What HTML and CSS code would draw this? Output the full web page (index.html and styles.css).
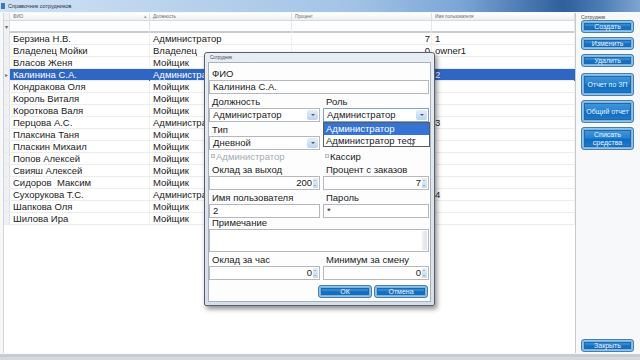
FILE: index.html
```html
<!DOCTYPE html>
<html lang="ru">
<head>
  <meta charset="UTF-8">
  <meta name="viewport" content="width=device-width, initial-scale=1.0">
  <title>Справочник сотрудников</title>
  <link rel="stylesheet" href="styles.css">
</head>
<body>

  <!-- Главное окно -->
  <div class="window">
    <div class="titlebar">
      <span class="app-icon"></span>
      <span class="title">Справочник сотрудников</span>
    </div>

    <div class="client">
      <!-- Таблица сотрудников -->
      <div class="grid">
        <div class="row head">
          <div class="ind"></div>
          <div class="cell">ФИО <span class="sort">▴</span></div>
          <div class="cell">Должность</div>
          <div class="cell">Процент</div>
          <div class="cell">Имя пользователя</div>
        </div>
        <div class="row filter">
          <div class="ind">▾</div>
          <div class="cell"></div>
          <div class="cell"></div>
          <div class="cell"></div>
          <div class="cell"></div>
        </div>

        <div class="row"><div class="ind"></div><div class="cell">Берзина Н.В.</div><div class="cell">Администратор</div><div class="cell num">7</div><div class="cell">1</div></div>
        <div class="row"><div class="ind"></div><div class="cell">Владелец Мойки</div><div class="cell">Владелец</div><div class="cell num">0</div><div class="cell">owner1</div></div>
        <div class="row"><div class="ind"></div><div class="cell">Власов Женя</div><div class="cell">Мойщик</div><div class="cell num"></div><div class="cell"></div></div>
        <div class="row selected"><div class="ind">▸</div><div class="cell">Калинина С.А.</div><div class="cell">Администратор</div><div class="cell num"></div><div class="cell">2</div></div>
        <div class="row"><div class="ind"></div><div class="cell">Кондракова Оля</div><div class="cell">Мойщик</div><div class="cell num"></div><div class="cell"></div></div>
        <div class="row"><div class="ind"></div><div class="cell">Король Виталя</div><div class="cell">Мойщик</div><div class="cell num"></div><div class="cell"></div></div>
        <div class="row"><div class="ind"></div><div class="cell">Короткова Валя</div><div class="cell">Мойщик</div><div class="cell num"></div><div class="cell"></div></div>
        <div class="row"><div class="ind"></div><div class="cell">Перцова А.С.</div><div class="cell">Администратор</div><div class="cell num"></div><div class="cell">3</div></div>
        <div class="row"><div class="ind"></div><div class="cell">Плаксина Таня</div><div class="cell">Мойщик</div><div class="cell num"></div><div class="cell"></div></div>
        <div class="row"><div class="ind"></div><div class="cell">Пласкин Михаил</div><div class="cell">Мойщик</div><div class="cell num"></div><div class="cell"></div></div>
        <div class="row"><div class="ind"></div><div class="cell">Попов Алексей</div><div class="cell">Мойщик</div><div class="cell num"></div><div class="cell"></div></div>
        <div class="row"><div class="ind"></div><div class="cell">Свияш Алексей</div><div class="cell">Мойщик</div><div class="cell num"></div><div class="cell"></div></div>
        <div class="row"><div class="ind"></div><div class="cell">Сидоров&nbsp; Максим</div><div class="cell">Мойщик</div><div class="cell num"></div><div class="cell"></div></div>
        <div class="row"><div class="ind"></div><div class="cell">Сухорукова Т.С.</div><div class="cell">Администратор</div><div class="cell num"></div><div class="cell">4</div></div>
        <div class="row"><div class="ind"></div><div class="cell">Шапкова Оля</div><div class="cell">Мойщик</div><div class="cell num"></div><div class="cell"></div></div>
        <div class="row"><div class="ind"></div><div class="cell">Шилова Ира</div><div class="cell">Мойщик</div><div class="cell num"></div><div class="cell"></div></div>
      </div>

      <!-- Панель действий -->
      <div class="side">
        <div class="group-label">Сотрудник</div>
        <button class="btn">Создать</button>
        <button class="btn">Изменить</button>
        <button class="btn">Удалить</button>
        <button class="btn tall first-tall">Отчет по ЗП</button>
        <button class="btn tall">Общий отчет</button>
        <button class="btn tall">Списать<br>средства</button>
        <button class="btn close">Закрыть</button>
      </div>
    </div>
    <div class="statusbar"></div>
  </div>

  <!-- Окно редактирования сотрудника -->
  <div class="dialog">
    <div class="dlg-title">Сотрудник</div>
    <div class="dlg-body">
      <div class="lbl">ФИО</div>
      <div class="field">Калинина С.А.</div>

      <div class="pair">
        <div class="lbl">Должность</div>
        <div class="lbl">Роль</div>
      </div>
      <div class="pair">
        <div class="field combo">Администратор<span class="drop"></span></div>
        <div class="field combo focus">Администратор<span class="drop"></span></div>
      </div>

      <div class="pair">
        <div class="lbl">Тип</div>
        <div class="lbl"></div>
      </div>
      <div class="pair">
        <div class="field combo">Дневной<span class="drop"></span></div>
        <div></div>
      </div>

      <div class="pair checks">
        <label class="chk disabled"><span class="box"></span>Администратор</label>
        <label class="chk"><span class="box"></span>Кассир</label>
      </div>

      <div class="pair">
        <div class="lbl">Оклад за выход</div>
        <div class="lbl">Процент с заказов</div>
      </div>
      <div class="pair">
        <div class="field num">200<span class="spin"></span></div>
        <div class="field num">7<span class="spin"></span></div>
      </div>

      <div class="pair">
        <div class="lbl">Имя пользователя</div>
        <div class="lbl">Пароль</div>
      </div>
      <div class="pair">
        <div class="field">2</div>
        <div class="field">*</div>
      </div>

      <div class="lbl short">Примечание</div>
      <div class="field memo"><span class="vscroll"></span></div>

      <div class="pair">
        <div class="lbl">Оклад за час</div>
        <div class="lbl">Минимум за смену</div>
      </div>
      <div class="pair">
        <div class="field num">0<span class="spin"></span></div>
        <div class="field num">0<span class="spin"></span></div>
      </div>

      <div class="dlg-buttons">
        <button class="btn">ОК</button>
        <button class="btn">Отмена</button>
      </div>
    </div>

    <!-- Раскрытый список ролей -->
    <div class="droplist">
      <div class="item active">Администратор</div>
      <div class="item">Администратор тест<svg class="cursor" width="5" height="8" viewBox="0 0 5 8"><path d="M0.5 0.5 L0.5 6.5 L1.8 5.2 L2.8 7.5 L3.6 7.1 L2.7 4.9 L4.5 4.9 Z" fill="#fff" stroke="#333" stroke-width="0.6"/></svg></div>
    </div>
  </div>

</body>
</html>
```

FILE: styles.css
```css
* {
  box-sizing: border-box;
}
html, body {
  margin: 0;
  padding: 0;
}
body {
  width: 640px;
  height: 360px;
  overflow: hidden;
  position: relative;
  background-color: #d5d8dc;
  font-family: "Liberation Sans", Arial, sans-serif;
  font-size: 9.5px;
  color: #1b1b1b;
}

/* Главное окно */
.window {
  height: 357px;
  display: flex;
  flex-direction: column;
  background-color: #f6f8fa;
}
.titlebar {
  height: 12px;
  display: flex;
  align-items: center;
  padding-left: 1px;
  background: linear-gradient(90deg, #cfe2f4 0%, #b7d1ec 30%, #a3c3e6 55%, #7aa6d6 72%, #2f5f9c 88%, #4d7db6 94%, #7ea5d0 100%);
}
.app-icon {
  width: 4px;
  height: 6px;
  background-color: #3f77bb;
  margin-right: 3px;
}
.title {
  font-size: 5.5px;
  color: #24303c;
}
.client {
  flex: 1;
  display: flex;
  padding: 1px 0 1px 3px;
}

/* Таблица */
.grid {
  width: 573px;
  display: flex;
  flex-direction: column;
  background-color: #fff;
  border-left: 1px solid #d3d6db;
  border-right: 1px solid #c6cad0;
}
.row {
  display: grid;
  grid-template-columns: 6px 140px 142px 140px 143px;
  height: 12px;
  line-height: 12px;
  border-bottom: 1px solid #ececec;
}
.row .cell {
  padding-left: 3px;
  white-space: nowrap;
  overflow: hidden;
  border-right: 1px solid #f1f1f1;
}
.row .cell.num {
  text-align: right;
  padding-right: 1px;
}
.row .ind {
  background-color: #eff1f3;
  border-right: 1px solid #dcdfe3;
  font-size: 6px;
  color: #666;
  text-align: center;
}
.row.head {
  height: 8px;
  line-height: 8px;
  font-size: 4.5px;
  color: #6b6b6b;
  background: linear-gradient(#ffffff, #eceff2);
  border-bottom: 1px solid #d6d9dd;
}
.row.head .cell {
  display: flex;
  justify-content: space-between;
  padding-right: 2px;
  border-right: 1px solid #dadde1;
}
.sort {
  color: #999;
}
.row.filter {
  height: 12px;
  border-bottom: 2px solid #c9ccd0;
}
.row.filter .cell {
  border-right: 1px solid #e4e6e9;
}
.row.selected {
  background-color: #2e66c4;
  color: #fff;
}
.row.selected .cell {
  border-right-color: #2e66c4;
}
.row.selected .ind {
  color: #777;
}

/* Панель действий */
.side {
  flex: 1;
  display: flex;
  flex-direction: column;
  padding: 1px 0 0 5px;
}
.group-label {
  font-size: 5px;
  line-height: 6px;
  color: #444;
}
.btn {
  width: 53px;
  height: 13px;
  margin: 0 0 4px;
  padding: 0;
  border: 1px solid #467eb0;
  border-radius: 3px;
  background: linear-gradient(#4a9ddf 0%, #2684d0 45%, #0f6bbf 55%, #2380cd 100%);
  box-shadow: inset 0 0 0 1px #8fc4ec, inset 0 0 0 2px #7ab6e6, inset 0 0 0 3px #2566a3;
  color: #eaf5ff;
  font-family: "Liberation Sans", Arial, sans-serif;
  font-size: 7px;
  line-height: 8px;
}
.btn.tall {
  height: 23px;
}
.btn.first-tall {
  margin-top: 2px;
}
.btn.close {
  margin-top: auto;
  margin-bottom: 1px;
}
.statusbar {
  height: 3px;
  background-color: #c9ccd1;
}

/* Диалог */
.dialog {
  position: absolute;
  left: 204px;
  top: 52px;
  width: 231px;
  height: 254px;
  display: flex;
  flex-direction: column;
  padding: 0 3px 3px;
  border: 1px solid #58616b;
  border-radius: 3px 3px 2px 2px;
  background: linear-gradient(#e8edf3, #d6dee8);
  box-shadow: 2px 3px 5px rgba(0, 0, 0, 0.45);
}
.dlg-title {
  height: 9px;
  line-height: 9px;
  padding-left: 2px;
  font-size: 4.5px;
  color: #3a4450;
}
.dlg-body {
  flex: 1;
  background-color: #fdfdfd;
  border: 1px solid #a7b1bd;
  padding: 3px 1px 0 0;
  font-size: 9.5px;
}
.pair {
  display: grid;
  grid-template-columns: 111px 106px;
  column-gap: 3px;
}
.lbl {
  height: 14px;
  line-height: 14px;
  padding-left: 3px;
  padding-top: 1px;
  white-space: nowrap;
}
.lbl.short {
  height: 11px;
  line-height: 10px;
  padding-top: 0;
}
.field {
  position: relative;
  height: 14px;
  line-height: 12px;
  padding: 0 3px;
  border: 1px solid #b4b8be;
  background-color: #fff;
  white-space: nowrap;
}
.field.combo {
  padding-right: 14px;
}
.field.focus {
  border-color: #7da2ce;
}
.drop {
  position: absolute;
  right: 1px;
  top: 1px;
  width: 11px;
  height: 10px;
  border-radius: 2px;
  background: linear-gradient(#e3eefa, #bcd3ee);
}
.drop::after {
  content: "";
  position: absolute;
  left: 4px;
  top: 4px;
  border-left: 2px solid transparent;
  border-right: 2px solid transparent;
  border-top: 2px solid #4a5a6c;
}
.field.num {
  text-align: right;
  padding-right: 7px;
}
.spin {
  position: absolute;
  right: 1px;
  top: 1px;
  width: 5px;
  height: 10px;
  background: linear-gradient(#e6eef8, #c7d8ec);
}
.spin::before, .spin::after {
  content: "";
  position: absolute;
  left: 1px;
  border-left: 1.5px solid transparent;
  border-right: 1.5px solid transparent;
}
.spin::before {
  top: 2px;
  border-bottom: 1.5px solid #6a7a8c;
}
.spin::after {
  bottom: 2px;
  border-top: 1.5px solid #6a7a8c;
}
.checks {
  height: 12px;
  line-height: 11px;
}
.chk {
  display: flex;
  align-items: center;
  padding-left: 2px;
}
.chk.disabled {
  color: #a4abb3;
}
.box {
  width: 4px;
  height: 4px;
  margin-right: 1px;
  border: 1px solid #b9c0c8;
  background-color: #e9eef3;
}
.field.memo {
  height: 23px;
}
.vscroll {
  position: absolute;
  right: 1px;
  top: 1px;
  bottom: 1px;
  width: 5px;
  background: linear-gradient(90deg, #eef1f4, #dde3e9);
}
.dlg-buttons {
  display: flex;
  justify-content: flex-end;
  gap: 2px;
  margin-top: 5px;
  padding-right: 1px;
}
.dlg-buttons .btn {
  width: 54px;
  margin: 0;
}

/* Раскрытый список */
.droplist {
  position: absolute;
  left: 118px;
  top: 69px;
  width: 107px;
  height: 25px;
  border: 1px solid #5c5c5c;
  background-color: #fff;
  font-size: 9.5px;
}
.droplist .item {
  position: relative;
  height: 11.5px;
  line-height: 11.5px;
  padding-left: 2px;
  white-space: nowrap;
}
.droplist .item.active {
  background-color: #3574d4;
  color: #fff;
}
.cursor {
  position: absolute;
  left: 86px;
  top: 3px;
}
```
